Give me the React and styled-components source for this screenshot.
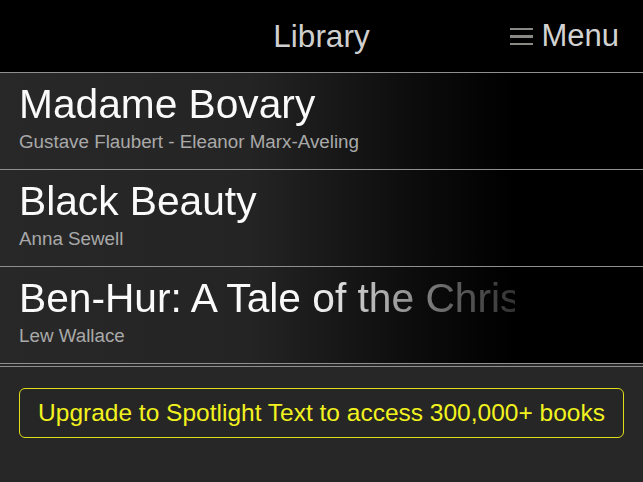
import React from "react";
import styled, { createGlobalStyle } from "styled-components";

const Global = createGlobalStyle`
  html, body { margin: 0; padding: 0; background: #272727; }
  body { font-family: "Liberation Sans", Arial, sans-serif; }
  * { box-sizing: border-box; }
`;

const Screen = styled.div`
  width: 643px;
  height: 482px;
  display: flex;
  flex-direction: column;
  background: #272727;
  overflow: hidden;
`;

const Header = styled.header`
  height: 73px;
  flex: none;
  background: #000;
  border-bottom: 1px solid #8f8f8f;
  display: grid;
  grid-template-columns: 1fr auto 1fr;
  align-items: center;
  padding-bottom: 1px;
`;

const Title = styled.div`
  grid-column: 2;
  color: #cfcfcf;
  font-size: 31.5px;
  line-height: 34px;
`;

const MenuButton = styled.div`
  grid-column: 3;
  justify-self: end;
  margin-right: 24px;
  display: flex;
  align-items: center;
  gap: 8px;
  color: #d2d2d2;
  font-size: 31px;
  line-height: 34px;
`;

const Burger = styled.span`
  display: flex;
  flex-direction: column;
  gap: 5px;
  width: 23px;
  margin-top: 2px;
  & > i {
    display: block;
    height: 2.6px;
    background: #8b8985;
  }
`;

const List = styled.div`
  flex: none;
  display: flex;
  flex-direction: column;
  border-bottom: 1px solid #8f8f8f;
  padding-bottom: 2px;
`;

const Row = styled.div`
  height: 97px;
  border-bottom: 1px solid #8f8f8f;
  background: linear-gradient(
    to right,
    #282828 0px,
    #242424 250px,
    #0a0a0a 430px,
    #000 515px
  );
  padding: 8px 0 0 19px;
`;

const BookTitle = styled.div`
  width: 496px;
  overflow: hidden;
  white-space: nowrap;
  color: #fafafa;
  font-size: 40.7px;
  line-height: 46px;
  -webkit-mask-image: linear-gradient(to right, #000 290px, rgba(0,0,0,0.6) 380px, rgba(0,0,0,0.35) 440px, rgba(0,0,0,0.2) 496px);
  mask-image: linear-gradient(to right, #000 290px, rgba(0,0,0,0.6) 380px, rgba(0,0,0,0.35) 440px, rgba(0,0,0,0.2) 496px);
`;

const Author = styled.div`
  margin-top: 4px;
  color: #a9a9a9;
  font-size: 18.8px;
  line-height: 22px;
  white-space: nowrap;
`;

const Footer = styled.div`
  flex: 1;
  padding: 21px 19px 0 19px;
  background: #272727;
`;

const Upgrade = styled.button`
  width: 605px;
  height: 50px;
  background: #262626;
  border: 1.5px solid #dede1a;
  border-radius: 6px;
  color: #f2f21e;
  font-family: "Liberation Sans", Arial, sans-serif;
  font-size: 24.5px;
  padding: 0;
  display: flex;
  align-items: center;
  justify-content: center;
  cursor: pointer;
`;

const books = [
  { title: "Madame Bovary", author: "Gustave Flaubert - Eleanor Marx-Aveling" },
  { title: "Black Beauty", author: "Anna Sewell" },
  { title: "Ben-Hur: A Tale of the Christ", author: "Lew Wallace" },
];

export default function App() {
  return (
    <Screen>
      <Global />
      <Header>
        <Title>Library</Title>
        <MenuButton>
          <Burger>
            <i />
            <i />
            <i />
          </Burger>
          Menu
        </MenuButton>
      </Header>
      <List>
        {books.map((b) => (
          <Row key={b.title}>
            <BookTitle>{b.title}</BookTitle>
            <Author>{b.author}</Author>
          </Row>
        ))}
      </List>
      <Footer>
        <Upgrade>Upgrade to Spotlight Text to access 300,000+ books</Upgrade>
      </Footer>
    </Screen>
  );
}
